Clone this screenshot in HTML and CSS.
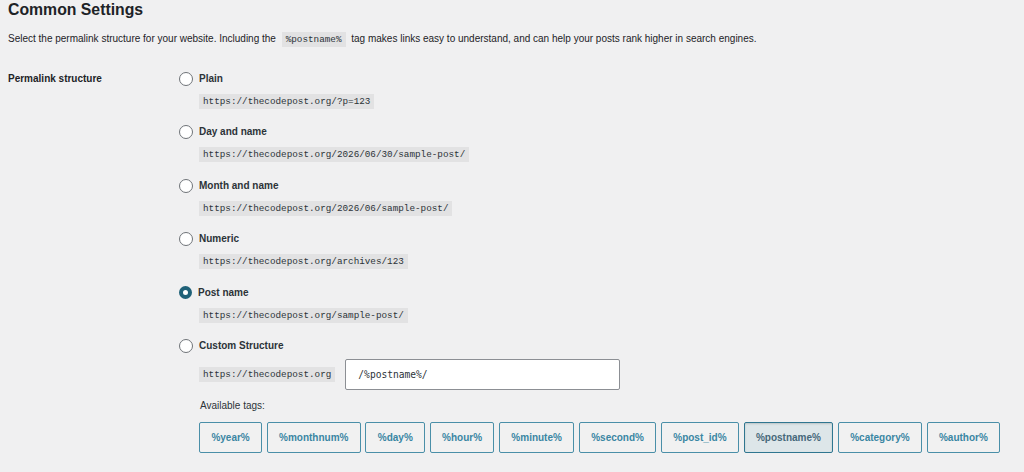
FILE: index.html
```html
<!DOCTYPE html>
<html>
<head>
<meta charset="utf-8">
<link rel="stylesheet" href="styles.css">
</head>
<body>
<h2 class="title">Common Settings</h2>
<p class="desc">Select the permalink structure for your website. Including the <code>%postname%</code> tag makes links easy to understand, and can help your posts rank higher in search engines.</p>
<div class="form-row">
  <div class="th">Permalink structure</div>
  <div class="td">
    <div class="option">
      <label class="radio-line"><span class="radio"></span>Plain</label>
      <code>https://thecodepost.org/?p=123</code>
    </div>
    <div class="option">
      <label class="radio-line"><span class="radio"></span>Day and name</label>
      <code>https://thecodepost.org/2026/06/30/sample-post/</code>
    </div>
    <div class="option">
      <label class="radio-line"><span class="radio"></span>Month and name</label>
      <code>https://thecodepost.org/2026/06/sample-post/</code>
    </div>
    <div class="option">
      <label class="radio-line"><span class="radio"></span>Numeric</label>
      <code>https://thecodepost.org/archives/123</code>
    </div>
    <div class="option">
      <label class="radio-line"><span class="radio checked"></span>Post name</label>
      <code>https://thecodepost.org/sample-post/</code>
    </div>
    <div class="option">
      <label class="radio-line"><span class="radio"></span>Custom Structure</label>
      <div class="custom-row">
        <code>https://thecodepost.org</code>
        <div class="input">/%postname%/</div>
      </div>
      <div class="avail">Available tags:</div>
      <div class="tags">
        <span class="tag">%year%</span>
        <span class="tag">%monthnum%</span>
        <span class="tag">%day%</span>
        <span class="tag">%hour%</span>
        <span class="tag">%minute%</span>
        <span class="tag">%second%</span>
        <span class="tag">%post_id%</span>
        <span class="tag active">%postname%</span>
        <span class="tag">%category%</span>
        <span class="tag">%author%</span>
      </div>
    </div>
  </div>
</div>
</body>
</html>
```
FILE: styles.css
```css
html, body {
  margin: 0;
  padding: 0;
  background: #f0f0f1;
}
body {
  padding: 0 8px;
  font-family: "Liberation Sans", Arial, sans-serif;
  font-size: 10px;
  color: #1d2327;
  overflow: hidden;
  height: 472px;
}
.title {
  margin: 0;
  padding-top: 1px;
  font-size: 15.8px;
  font-weight: 700;
  line-height: 18px;
}
.desc {
  margin: 12px 0 0;
  line-height: 16px;
}
code {
  font-family: "Liberation Mono", "DejaVu Sans Mono", monospace;
  font-size: 9.3px;
  background: #e2e2e3;
  padding: 2px 4px;
  line-height: 11px;
  color: #2c3338;
}
.desc code {
  margin: 0 3px;
}
.form-row {
  display: grid;
  grid-template-columns: 171px 1fr;
  margin-top: 24px;
}
.th {
  font-weight: 700;
  line-height: 16px;
}
.td {
  display: flex;
  flex-direction: column;
  gap: 15.4px;
}
.option {
  display: flex;
  flex-direction: column;
  align-items: flex-start;
}
.option > code {
  margin-left: 20px;
  margin-top: 7px;
  display: inline-block;
}
.radio-line {
  display: flex;
  align-items: center;
  gap: 6px;
  line-height: 16px;
  font-weight: 700;
  color: #2c3338;
}
.radio {
  width: 12px;
  height: 12px;
  border: 1px solid #6f7378;
  border-radius: 50%;
  background: #fff;
  box-sizing: content-box;
}
.radio.checked {
  width: 5px;
  height: 5px;
  border: 4.5px solid #1f6178;
}
.custom-row {
  margin-left: 20px;
  margin-top: 5px;
  display: flex;
  align-items: center;
  gap: 10px;
}
.custom-row code {
  display: inline-block;
}
.input {
  width: 249px;
  height: 29px;
  border: 1px solid #8c8f94;
  background: #fff;
  border-radius: 2px;
  font-family: "DejaVu Sans Mono", monospace;
  font-size: 9.6px;
  line-height: 29px;
  padding: 0 12px;
  color: #2c3338;
}
.avail {
  margin-left: 21px;
  margin-top: 8px;
  line-height: 16px;
  color: #2c3338;
}
.tags {
  margin-left: 20px;
  margin-top: 8px;
  display: flex;
  gap: 4.5px;
}
.tag {
  height: 29px;
  line-height: 29px;
  padding: 0 11.4px;
  border: 1px solid #4a8fa8;
  border-radius: 2px;
  color: #3a86a3;
  font-weight: 700;
  font-size: 10px;
  background: #f1f1f1;
}
.tag.active {
  background: #dde6e9;
  border-color: #2f7690;
  color: #46687a;
  box-shadow: inset 0 1px 2px rgba(0,0,0,0.15);
}
```
